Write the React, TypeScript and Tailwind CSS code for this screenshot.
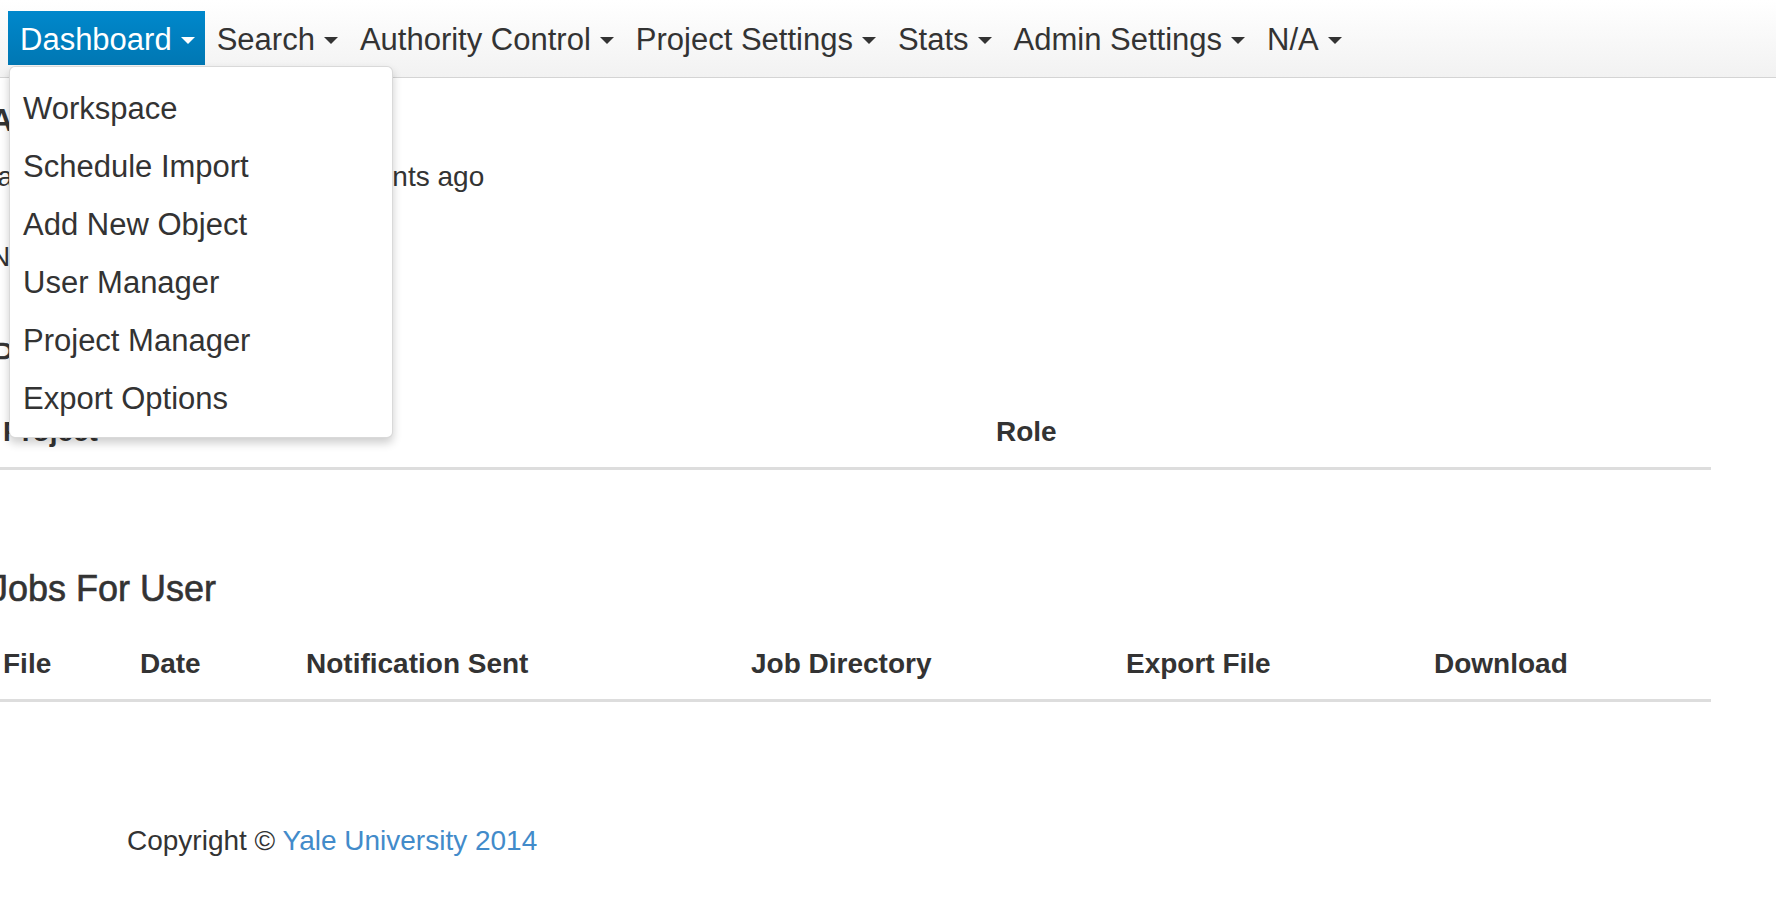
import React from 'react';

const FONT = { fontFamily: '"Liberation Sans", Arial, sans-serif' };

const NAV = ['Dashboard', 'Search', 'Authority Control', 'Project Settings', 'Stats', 'Admin Settings', 'N/A'];
const MENU = ['Workspace', 'Schedule Import', 'Add New Object', 'User Manager', 'Project Manager', 'Export Options'];

function Caret({ light }: { light?: boolean }) {
  return (
    <span
      className={
        'ml-[9px] inline-block h-0 w-0 border-l-[7px] border-r-[7px] border-t-[7px] border-l-transparent border-r-transparent ' +
        (light ? 'border-t-white' : 'border-t-[#333333]')
      }
    />
  );
}

function NavBar() {
  return (
    <div className="relative z-10">
      <div className="h-[78px] border-b border-[#d4d4d4] bg-gradient-to-b from-white to-[#f2f2f2]">
        <div className="flex pl-[8px] pt-[11px]">
          {NAV.map((n, i) => (
            <div
              key={n}
              className={
                'flex h-[54px] items-center pl-[12px] pr-[10px] pt-[4px] text-[31px] ' +
                (i === 0 ? 'bg-gradient-to-b from-[#0088cc] to-[#0077b3] text-white' : 'text-[#333333]')
              }
            >
              <span>{n}</span>
              <Caret light={i === 0} />
            </div>
          ))}
        </div>
      </div>
      {/* open Dashboard menu */}
      <div className="absolute left-[9px] top-[66px] w-[384px] rounded-[6px] border border-black/15 bg-white pb-[9px] pt-[13px] shadow-[0_5px_10px_rgba(0,0,0,0.2)]">
        {MENU.map((m) => (
          <div key={m} className="h-[58px] pl-[13px] text-[31px] leading-[58px] text-[#333333]">
            {m}
          </div>
        ))}
      </div>
    </div>
  );
}

function HeadRow({ cols, tpl }: { cols: string[]; tpl: string }) {
  return (
    <div className={'grid border-b-[3px] border-[#dddddd] ' + tpl}>
      {cols.map((c) => (
        <div key={c} className="px-[13px] py-[15px] text-[28px] font-bold leading-[40px] text-[#333333]">
          {c}
        </div>
      ))}
    </div>
  );
}

export default function App() {
  return (
    <div className="min-h-[920px] overflow-hidden bg-white text-[#333333]" style={FONT}>
      <NavBar />
      <div className="ml-[-10px] w-[1721px]">
        <h2 className="mt-[24px] text-[32px] font-bold leading-[36px]">Account Information</h2>
        <p className="ml-[-8px] mt-[21px] text-[28px] leading-[36px]">Last Login: Monday, a few moments ago</p>
        <p className="mt-[44px] text-[28px] leading-[36px]">No notifications</p>
        <h3 className="mt-[62px] text-[36px] leading-[40px] [-webkit-text-stroke:0.6px_#333333]">Projects For User</h3>
        <div className="mt-[20px]">
          <HeadRow cols={['Project', 'Role']} tpl="grid-cols-[993px_1fr]" />
        </div>
        <h3 className="mt-[99px] text-[36px] leading-[40px] [-webkit-text-stroke:0.6px_#333333]">Jobs For User</h3>
        <div className="mt-[20px]">
          <HeadRow
            cols={['File', 'Date', 'Notification Sent', 'Job Directory', 'Export File', 'Download']}
            tpl="grid-cols-[137px_166px_445px_375px_308px_1fr]"
          />
        </div>
      </div>
      <footer className="mt-[121px] pl-[127px] text-[28px] leading-[36px]">
        Copyright © <a className="text-[#428bca]">Yale University 2014</a>
      </footer>
    </div>
  );
}
